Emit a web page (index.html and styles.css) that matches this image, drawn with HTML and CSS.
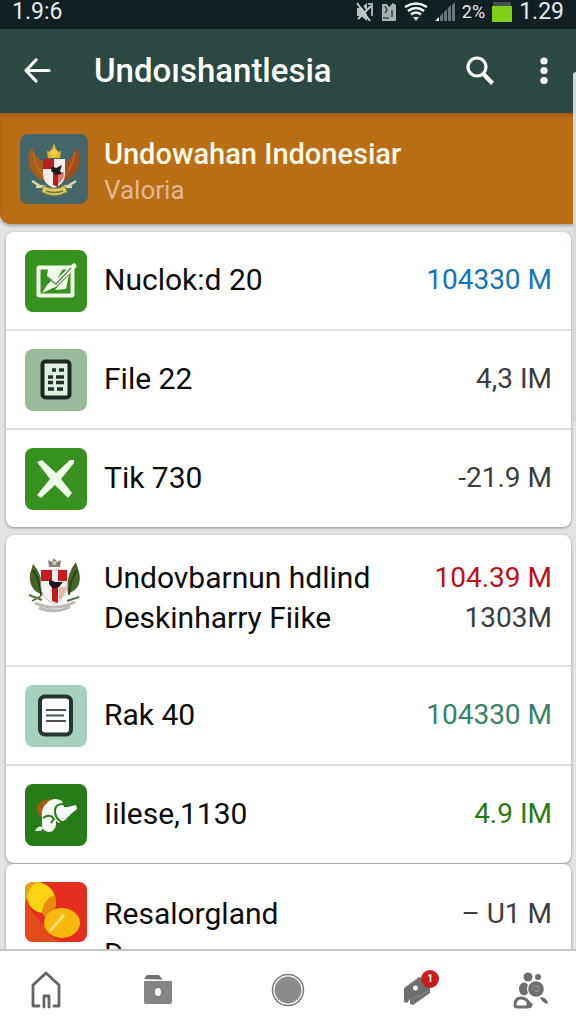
FILE: index.html
```html
<!DOCTYPE html>
<html lang="id">
<head>
  <meta charset="UTF-8" />
  <meta name="viewport" content="width=device-width, initial-scale=1.0"/>
  <title>Undoıshantlesia</title>
  <link rel="stylesheet" href="styles.css">
</head>
<body>
<div class="status-bar">
  <span class="clock">1.9:6</span>
  <div class="status-icons">
    <svg width="18" height="20" viewBox="0 0 18 20"><path d="M1 6h4l6-5v18l-6-5H1z" fill="#b9bfc1"/><path d="M12 2h4v12" fill="none" stroke="#a2abad" stroke-width="2"/><path d="M3 0l14 19" stroke="#121e22" stroke-width="2"/><path d="M1 1l13 18M15 4L2 17" stroke="#c6cbcd" stroke-width="2"/></svg>
    <svg width="16" height="20" viewBox="0 0 16 20"><path d="M1 2h5l2 3 4-4 3 2v16H1z" fill="#a9b0b2"/><path d="M4 4l2 4-2 3M11 8v7M2 16h6" stroke="#354044" stroke-width="1.5" fill="none"/></svg>
    <svg width="24" height="20" viewBox="0 0 24 20" fill="none" stroke="#f2f5f5" stroke-width="2.6"><path d="M1 5q11-7 22 0M4 9q8-6 16 0M7 12.500q5-4 10 0"/><path d="M9 15h6l-3 4z" fill="#d5dada" stroke="none"/></svg>
    <svg width="20" height="20" viewBox="0 0 20 20"><path d="M0 19l4-4v4z" fill="#f2f5f5"/><path d="M5 14l3-3v8H5zM9 10l3-3v12H9zM13 6l3-3v16h-3zM17 3l3-3v19h-3z" fill="#6c777b"/></svg>
    <span class="percent">2%</span>
    <svg width="20" height="20" viewBox="0 0 20 20"><path d="M1 0h18v4H1z" fill="#42504f"/><path d="M0 4h20v16H0z" fill="#7fd016"/></svg>
    <span class="clock">1.29</span>
  </div>
</div>

<header class="app-bar">
  <button class="bar-btn" aria-label="Kembali">
    <svg width="28" height="28" viewBox="0 0 28 28" fill="none" stroke="#fff" stroke-width="3.200" stroke-linecap="round" stroke-linejoin="round"><path d="M12 3L2 13.500l10 10.500M2 13.500h23"/></svg>
  </button>
  <h1 class="bar-title">Undoıshantlesia</h1>
  <button class="bar-btn" aria-label="Cari">
    <svg width="30" height="30" viewBox="0 0 30 30" fill="none" stroke="#fff"><circle cx="12" cy="11" r="9" stroke-width="3.200"/><path d="M18 17.500l9.500 10" stroke-width="4.200"/></svg>
  </button>
  <button class="bar-btn more" aria-label="Menu">
    <svg width="10" height="28" viewBox="0 0 10 28" fill="#fff"><circle cx="5" cy="4" r="3.600"/><circle cx="5" cy="13.500" r="3.600"/><circle cx="5" cy="23.500" r="3.600"/></svg>
  </button>
</header>

<section class="banner">
  <svg class="banner-icon" viewBox="0 0 68 70">
    <rect width="68" height="70" rx="8" fill="#466769"/>
    <path d="M12 13C6 23 7 37 20 45l7 3V29C19 27 14 22 12 13z" fill="#a95d1b"/>
    <path d="M56 13c6 10 5 24-8 32l-7 3V29c8-2 13-7 15-16z" fill="#a64e1b"/>
    <path d="M13 18q3 17 12 26M55 18q-3 17-12 26" stroke="#c07b24" stroke-width="1" fill="none"/>
    <path d="M28 24l-1-7 4 1 3-9 3 9 4-1-1 7z" fill="#e2b52c"/><circle cx="34" cy="19" r="4" fill="#edc943"/>
    <path d="M23 25h22v15q0 10-11 14-11-4-11-14z" fill="#f5eee8"/>
    <path d="M23 25h11v10H23zM33 36l5 4v13l-5-2z" fill="#b41f20"/><path d="M38 38h6q0 8-6 12z" fill="#d77d78"/>
    <path d="M32 32l4 2 6-3-2 6 2 3-6 1-5-4z" fill="#211c20"/>
    <path d="M12 47l8 5 6 1M56 47l-8 5-6 1M16 53l8-1M52 53l-8-1" stroke="#dcd4a2" stroke-width="2.500" fill="none"/>
    <path d="M23 52q11 5 22 0l2 6q-13 7-25 0z" fill="#e0d069" stroke="#8f8b3a"/><path d="M26 57q8 3 17 0" stroke="#7a7433" stroke-width="1.500" fill="none"/>
  </svg>
  <div class="banner-text">
    <div class="banner-title">Undowahan Indonesiar</div>
    <div class="banner-sub">Valoria</div>
  </div>
</section>

<main class="list">
  <div class="card">
    <div class="row">
      <svg class="row-icon" viewBox="0 0 62 62"><rect width="62" height="62" rx="8" fill="#38901f"/><rect x="13.500" y="17.500" width="34" height="28" rx="1" fill="none" stroke="#f0fbe8" stroke-width="4"/><path d="M23 19h15l-8 13-8-6zM33 36l11-11-3 14-11 1z" fill="#f0fbe8"/><path d="M17 43l5-8 6-6 5 5-7 5z" fill="#f0fbe8"/><path d="M29 35l20-19" stroke="#f0fbe8" stroke-width="5" stroke-linecap="round"/><path d="M22 27l9 7 15-16" stroke="#6f7f6c" stroke-width="1.500" fill="none"/></svg>
      <div class="names"><span>Nuclok:d 20</span></div>
      <div class="amounts"><span class="blue">104330 M</span></div>
    </div>
    <div class="row">
      <svg class="row-icon" viewBox="0 0 62 62"><rect width="62" height="62" rx="8" fill="#9aba9c"/><rect x="17.500" y="12.500" width="27" height="36" rx="3" fill="#dfeee1" stroke="#1f2823" stroke-width="4"/><path d="M27 21h4M34 21h5M23 28h5M31 28h8M23 33.500h5M31 33.500h8M23 40h6M32 40h6" stroke="#252f29" stroke-width="3.500"/></svg>
      <div class="names"><span>File 22</span></div>
      <div class="amounts"><span>4,3 IM</span></div>
    </div>
    <div class="row">
      <svg class="row-icon" viewBox="0 0 62 62"><rect width="62" height="62" rx="8" fill="#38901f"/><path d="M12 14l5-2 14 13 14-13h4v3L36 31l11 14-4 5-13-13-14 13-4-3 13-16z" fill="#f0fbe8"/></svg>
      <div class="names"><span>Tik 730</span></div>
      <div class="amounts"><span>-21.9 M</span></div>
    </div>
  </div>

  <div class="card">
    <div class="row tall">
      <svg class="row-icon" viewBox="0 0 62 62">
        <path d="M8 11q11 12 10 31Q3 37 5 21zM51 9q-11 14-8 32 15-6 11-22z" fill="#466426"/><path d="M8 17q7 10 8 26M52 17q-7 10-8 25" stroke="#223d18" stroke-width="1.500" fill="none"/>
        <path d="M24 14l-1-7 4 2 2-4 3 4 4-2-1 7z" fill="#858278"/><circle cx="29.500" cy="10" r="2" fill="#d6cfad"/>
        <path d="M16 17h26v16q0 12-13 18-13-6-13-18z" fill="#f5f1ed" stroke="#c9c7c3"/>
        <path d="M16 17h11v11H16zM33 17h9v11h-9zM27 33h6v17l-6-2z" fill="#c51b20"/><path d="M34 34h7q-1 9-7 13z" fill="#e9b69f"/>
        <path d="M24 26l6 3 8 0-4 5-6 2-4-5z" fill="#25151a"/>
        <path d="M4 42l13 5M54 44l-12 4M7 48l9-5" stroke="#587343" stroke-width="2" fill="none"/>
        <path d="M10 50q19 9 40-1M14 55q15 6 31-1" stroke="#b8bab5" stroke-width="3" fill="none"/>
      </svg>
      <div class="names"><span>Undovbarnun hdlind</span><span>Deskinharry Fiike</span></div>
      <div class="amounts"><span class="red">104.39 M</span><span>1303M</span></div>
    </div>
    <div class="row">
      <svg class="row-icon" viewBox="0 0 62 62"><rect width="62" height="62" rx="8" fill="#a5d0bd"/><rect x="15" y="11.500" width="31" height="38" rx="5" fill="#fff" stroke="#24342e" stroke-width="4"/><path d="M21 25h20M21 30.500h18M21 36h20" stroke="#4b5551" stroke-width="2"/></svg>
      <div class="names"><span>Rak 40</span></div>
      <div class="amounts"><span class="teal">104330 M</span></div>
    </div>
    <div class="row">
      <svg class="row-icon" viewBox="0 0 62 62"><rect width="62" height="62" rx="8" fill="#277b18"/><path d="M18 35q-9-7-5-14 5-7 13-6z" fill="#a95a16"/><path d="M17 33q-1-9 4-13 7-8 16-3l2 6h4l8-2 1 4-5 4-7 7-6 3-3-2q1 9-6 11-8 0-8-7z" fill="#f7fbf5"/><path d="M40 20q-10-1-10 7 0 8 8 12M18 34q7-5 11 1l-3 4" stroke="#277b18" stroke-width="2" fill="none"/><path d="M10 47q2-6 9-4l-3 4z" fill="#e4efdf"/></svg>
      <div class="names"><span>Iilese,1130</span></div>
      <div class="amounts"><span class="green">4.9 IM</span></div>
    </div>
  </div>

  <div class="card joined">
    <div class="row tall">
      <svg class="row-icon" viewBox="0 0 62 62">
        <clipPath id="tile"><rect width="62" height="60" rx="8"/></clipPath>
        <g clip-path="url(#tile)"><rect width="62" height="62" fill="#e52d1f"/><path d="M0 0v62h40Q24 55 18 42L4 26z" fill="#e34a1b"/><path d="M7 0q12-1 18 6 6 6 5 13l-14 12Q2 27 2 13z" fill="#fbd514"/><path d="M0 0h13Q4 4 2 16l-2 4z" fill="#e4a416"/><path d="M17 31q1-14 13-18 2 8 0 14l6 2-14 9z" fill="#e8890f"/><ellipse cx="37" cy="41" rx="18" ry="15" fill="#f9b80d"/><path d="M25 49l14-16" stroke="#fce36d" stroke-width="3"/></g>
      </svg>
      <div class="names"><span>Resalorgland</span><span>D</span></div>
      <div class="amounts"><span>– U1 M</span></div>
    </div>
  </div>
</main>

<nav class="bottom-nav">
  <a href="#" aria-label="Beranda"><svg width="32" height="40" viewBox="0 0 32 40" fill="none" stroke="#626465" stroke-width="2.800" stroke-linejoin="round" stroke-linecap="round"><path d="M9 36H3V15L16 3l13 12v21h-5"/><path d="M14 37V26h5v11"/></svg></a>
  <a href="#" aria-label="Folder"><svg width="32" height="40" viewBox="0 0 32 40"><path d="M2 9l3-4h12l4 5z" fill="#6f7172"/><path d="M2 11h28v21q0 2-2 2H4q-2 0-2-2z" fill="#828485"/><path d="M5 10h15" stroke="#eee"/><ellipse cx="16" cy="22" rx="3" ry="4" fill="#fff"/></svg></a>
  <a href="#" aria-label="Utama"><svg width="34" height="40" viewBox="0 0 34 40"><circle cx="17" cy="20" r="15.500" fill="#fff" stroke="#77797a" stroke-width="1.500"/><circle cx="17" cy="20" r="13.500" fill="#8b8c8d"/></svg></a>
  <a href="#" aria-label="Tag"><svg width="32" height="40" viewBox="0 0 32 40"><path d="M2 18L17 7l11 3v13L11 35l-3-1v-5l-3 4-3-1z" fill="#6d6f70"/><path d="M3 18l15-11M11 34l1-6 15-7" stroke="#888b8c" fill="none"/><circle cx="13.500" cy="18" r="2.500" fill="#fff"/></svg><span class="badge">1</span></a>
  <a href="#" aria-label="Kontak"><svg width="36" height="40" viewBox="0 0 36 40" fill="#6c6e6f"><circle cx="16" cy="7" r="4.500"/><circle cx="26" cy="7" r="3"/><ellipse cx="12" cy="19" rx="5" ry="6.500"/><circle cx="24" cy="19" r="9" fill="#fff"/><circle cx="24" cy="19" r="7.800"/><path d="M20 20q1-5 5-4 4 2 1 5-3 1-3-1" fill="none" stroke="#a4a6a7"/><path d="M3 35q0-7 6-7 6 0 9 7 0 2-3 2H5q-2 0-2-2z" fill="#fff" stroke="#6c6e6f" stroke-width="3"/><path d="M15 30l6 4-2 4h-5z"/><path d="M28 27q7 0 8 7-6-1-8-7z"/></svg></a>
</nav>
<div class="scroll-thumb"></div>
</body>
</html>
```
FILE: styles.css
```css
* {
  box-sizing: border-box;
}
body {
  font-family: Roboto, "Liberation Sans", sans-serif;
  margin: 0;
  height: 100vh;
  display: flex;
  flex-direction: column;
  background: #e2e3e4;
  color: #0c0c0c;
  position: relative;
  overflow: hidden;
}
svg {
  display: block;
  flex: none;
}
.status-bar {
  display: flex;
  justify-content: space-between;
  align-items: center;
  height: 29px;
  flex: none;
  padding: 0 12px 5px;
  background: #121f23;
  color: #e6ebec;
}
.status-icons {
  display: flex;
  align-items: center;
  gap: 7px;
}
.clock {
  font-size: 23px;
  line-height: 24px;
}
.percent {
  font-size: 18px;
  line-height: 24px;
}
.app-bar {
  display: flex;
  align-items: center;
  height: 84px;
  flex: none;
  padding: 0 24px;
  background: #294942;
  color: #fff;
}
.bar-btn {
  border: 0;
  padding: 0;
  background: none;
  cursor: pointer;
}
.bar-btn.more {
  margin-left: 44px;
  margin-right: 3px;
}
.bar-title {
  flex: 1;
  margin: 0 0 0 42px;
  font-size: 33px;
  line-height: 40px;
  font-weight: 500;
}
.banner {
  display: flex;
  align-items: center;
  gap: 16px;
  height: 111px;
  flex: none;
  padding: 0 20px;
  background: #b96e16;
  border-radius: 0 0 0 10px;
  box-shadow: inset 0 3px 3px #9c5c16, 0 2px 3px #a9a9a9;
  color: #fff8e6;
}
.banner-icon {
  width: 68px;
  height: 70px;
}
.banner-text {
  padding-top: 6px;
}
.banner-title {
  font-size: 29px;
  line-height: 36px;
  font-weight: 500;
}
.banner-sub {
  font-size: 26px;
  line-height: 36px;
  color: #e3b795;
}
.list {
  flex: 1;
  min-height: 0;
  overflow: hidden;
  padding: 8px 5px 0 6px;
  border-bottom: 2px solid #c4c5c6;
}
.card {
  margin-bottom: 8px;
  background: #fff;
  border-radius: 8px;
  box-shadow: 0 1px 3px #8e8e8e;
}
.card.joined {
  margin-top: -7px;
}
.row {
  display: flex;
  align-items: flex-start;
  gap: 17px;
  padding: 18px 19px 17px;
}
.row + .row {
  border-top: 2px solid #dedede;
}
.row.tall {
  min-height: 130px;
}
.row-icon {
  width: 62px;
  height: 62px;
}
.names,
.amounts {
  display: flex;
  flex-direction: column;
  padding-top: 10px;
  line-height: 40px;
  white-space: nowrap;
}
.names {
  flex: 1;
  font-size: 30px;
}
.tall .names,
.tall .amounts {
  padding-top: 5px;
}
.joined .names,
.joined .amounts {
  padding-top: 12px;
}
.amounts {
  align-items: flex-end;
  font-size: 28px;
  color: #3c3d40;
}
.blue {
  color: #1674ba;
}
.red {
  color: #bd1019;
}
.teal {
  color: #36826b;
}
.green {
  color: #267c13;
}
.bottom-nav {
  display: flex;
  align-items: center;
  height: 73px;
  flex: none;
  padding-top: 4px;
  background: #fff;
}
.bottom-nav a {
  flex: 7;
  display: flex;
  justify-content: center;
  position: relative;
}
.bottom-nav a:first-child,
.bottom-nav a:last-child {
  flex: 5;
}
.badge {
  position: absolute;
  top: 0;
  left: calc(50% + 3px);
  width: 18px;
  height: 18px;
  border-radius: 50%;
  background: #c81d1c;
  color: #fff;
  font-size: 10px;
  line-height: 18px;
  font-weight: 700;
  text-align: center;
}
.scroll-thumb {
  position: absolute;
  top: 72px;
  right: 0;
  width: 3px;
  height: 350px;
  border-radius: 3px 0 0 3px;
  background: #d3dad8;
}
```
